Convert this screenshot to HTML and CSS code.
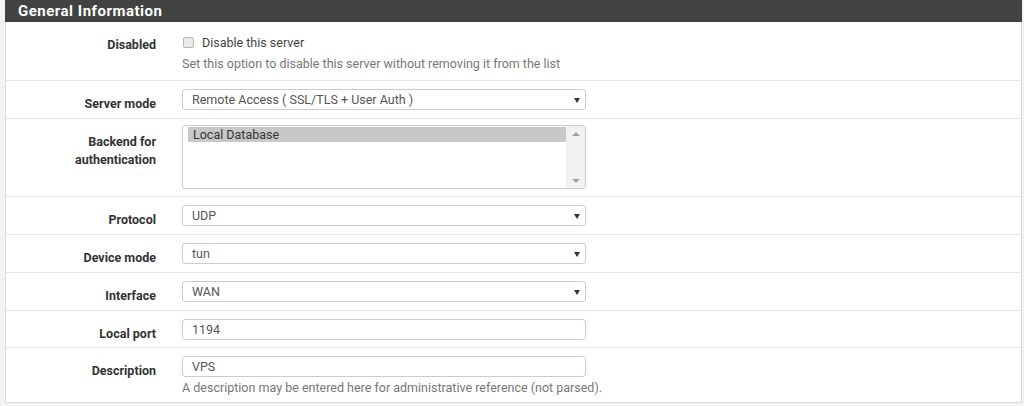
FILE: index.html
```html
<!DOCTYPE html>
<html>
<head>
    <title>OpenVPN Server</title>
    <meta charset="utf-8">
    <meta name="viewport" content="width=device-width, initial-scale=1">
    <link rel="stylesheet" href="styles.css">
</head>
<body>
<div class="panel">
    <div class="panel-heading">General Information</div>
    <div class="panel-body">
        <div class="form-row row-disabled">
            <label class="row-label">Disabled</label>
            <div class="row-field">
                <label class="check"><span class="box"></span>Disable this server</label>
                <div class="help">Set this option to disable this server without removing it from the list</div>
            </div>
        </div>
        <div class="form-row">
            <label class="row-label">Server mode</label>
            <div class="row-field">
                <div class="select">Remote Access ( SSL/TLS + User Auth )</div>
            </div>
        </div>
        <div class="form-row row-multi">
            <label class="row-label">Backend for<br>authentication</label>
            <div class="row-field">
                <div class="multi">
                    <div class="options">
                        <div class="option selected">Local Database</div>
                    </div>
                    <div class="scrollbar">
                        <span class="arrow-up"></span>
                        <span class="arrow-down"></span>
                    </div>
                </div>
            </div>
        </div>
        <div class="form-row">
            <label class="row-label">Protocol</label>
            <div class="row-field">
                <div class="select">UDP</div>
            </div>
        </div>
        <div class="form-row">
            <label class="row-label">Device mode</label>
            <div class="row-field">
                <div class="select">tun</div>
            </div>
        </div>
        <div class="form-row">
            <label class="row-label">Interface</label>
            <div class="row-field">
                <div class="select">WAN</div>
            </div>
        </div>
        <div class="form-row row-port">
            <label class="row-label">Local port</label>
            <div class="row-field">
                <input type="text" class="text-input" value="1194">
            </div>
        </div>
        <div class="form-row row-last">
            <label class="row-label">Description</label>
            <div class="row-field">
                <input type="text" class="text-input" value="VPS">
                <div class="help help-tight">A description may be entered here for administrative reference (not parsed).</div>
            </div>
        </div>
    </div>
</div>
</body>
</html>
```

FILE: styles.css
```css
* {
    box-sizing: border-box;
}

body {
    font-family: Roboto, "Liberation Sans", Arial, sans-serif;
    font-size: 12.5px;
    background-color: #f3f3f3;
    margin: 0;
    padding: 0 2px 0 5px;
    color: #333;
}

.panel {
    background-color: #fff;
    border: 1px solid #dcdcdc;
    border-top: none;
}

.panel-heading {
    background-color: #424242;
    color: #fff;
    font-weight: bold;
    font-size: 15px;
    letter-spacing: 0.5px;
    height: 22px;
    line-height: 22px;
    padding-left: 13px;
    margin: 0 -1px;
}

.form-row {
    display: grid;
    grid-template-columns: 150px 404px;
    column-gap: 26px;
    align-items: start;
    padding: 8px 0;
    border-bottom: 1px solid #e6e6e6;
}

.row-disabled {
    padding-bottom: 8px;
}

.row-multi {
    padding-bottom: 7px;
}

.row-port {
    padding-bottom: 7px;
}

.row-last {
    border-bottom: none;
    padding-bottom: 6px;
}

.row-label {
    text-align: right;
    font-weight: bold;
    font-size: 12.5px;
    line-height: 18px;
    padding-top: 6px;
    margin-bottom: -3px;
    color: #333;
}

.row-field {
    line-height: 17px;
}

.check {
    display: flex;
    align-items: center;
    margin-top: 4px;
    color: #444;
}

.box {
    width: 11px;
    height: 11px;
    margin: 0 8px 0 1px;
    border: 1px solid #b5b5b5;
    border-radius: 2px;
    background-color: #ebebeb;
}

.help {
    margin-top: 4px;
    color: #777;
    white-space: nowrap;
}

.help-tight {
    margin-top: 2px;
}

.select,
.text-input {
    position: relative;
    width: 100%;
    height: 21px;
    line-height: 19px;
    padding: 0 9px;
    border: 1px solid #ccc;
    border-radius: 3px;
    color: #555;
    font-family: inherit;
    font-size: 12.5px;
    background-color: #fff;
}

.text-input {
    display: block;
    outline: none;
}

.select::after {
    content: "";
    position: absolute;
    right: 5px;
    top: 8px;
    border-left: 3.5px solid transparent;
    border-right: 3.5px solid transparent;
    border-top: 5px solid #333;
}

.multi {
    display: flex;
    height: 64px;
    margin-top: -2px;
    border: 1px solid #ccc;
    border-radius: 3px;
    overflow: hidden;
}

.options {
    flex: 1;
    padding: 1px 0 0 5px;
}

.option {
    height: 15px;
    line-height: 15px;
    padding-left: 5px;
    color: #333;
}

.option.selected {
    background-color: #c8c8c8;
}

.scrollbar {
    width: 19px;
    background-color: #f1f1f1;
    display: flex;
    flex-direction: column;
    justify-content: space-between;
    align-items: center;
    padding: 6px 0 5px;
}

.arrow-up {
    border-left: 4px solid transparent;
    border-right: 4px solid transparent;
    border-bottom: 4px solid #a3a3a3;
}

.arrow-down {
    border-left: 4px solid transparent;
    border-right: 4px solid transparent;
    border-top: 4px solid #a3a3a3;
}
```
